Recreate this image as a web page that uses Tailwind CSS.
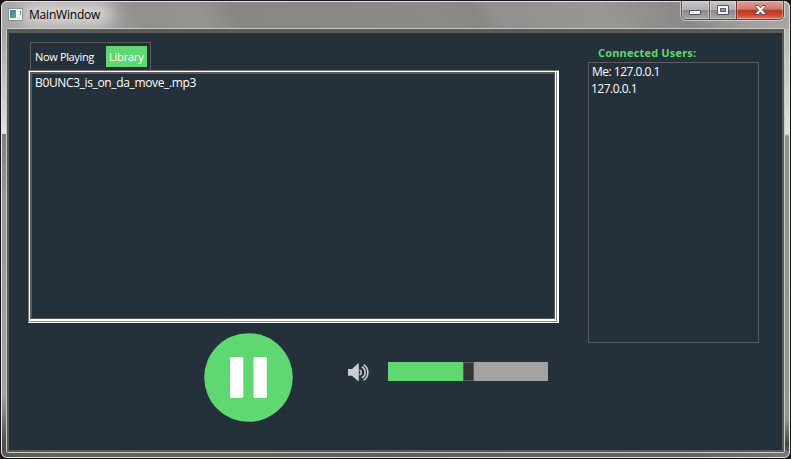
<!DOCTYPE html>
<html lang="en">
<head>
<meta charset="utf-8">
<title>MainWindow</title>
<script src="https://cdn.jsdelivr.net/npm/@tailwindcss/browser@4"></script>
</head>
<body class="bg-[#15151a] overflow-hidden font-['Open_Sans','Noto_Sans',sans-serif] text-white">
<div class="relative w-[791px] h-[459px] flex flex-col rounded-[7px] border border-[#17131a] bg-[#929292] overflow-hidden">
  <!-- window frame shading -->
  <div class="absolute inset-x-0 top-0 h-7 bg-[linear-gradient(60deg,#aaa8a6_0px,#a6a4a2_90px,#92908d_125px,#969491_180px,#878683_210px,#8b8a87_385px,#888784_418px,#92908e_435px,#999794_530px,#8b8987_600px,#a3a1a0_650px,#b5b3b2_790px)]"></div>
  <div class="absolute left-0 top-7 w-[7px] h-[106px] bg-linear-to-b from-[#a5a3a1] to-[#e6e4e3]"></div>
  <div class="absolute left-0 top-[133px] w-[7px] h-[325px] bg-[linear-gradient(#817e7b,#999592_60px,#a7a3a0_260px,#55524f_305px,#4a4846)]"></div>
  <div class="absolute right-0 top-7 w-[7px] h-[430px] bg-[linear-gradient(#b9b8b8,#cbcaca_50px,#e2e1e1_105px,#929191_107px,#969595_390px,#444_415px,#777)]"></div>
  <div class="absolute inset-x-0 bottom-0 h-[7px] bg-[linear-gradient(90deg,#555,#65645c_50px,#605f5f_50%,#656363_700px,#777)]"></div>
  <div class="absolute left-[20px] top-[3px] w-[92px] h-[20px] bg-white/60 blur-[8px] rounded-full"></div>
  <div class="absolute inset-0 border border-[#e5e1e5] rounded-[6px]"></div>

  <header class="relative h-[27px] shrink-0 flex items-start">
    <svg class="mt-[7px] ml-[7px] shrink-0" width="15" height="13" viewBox="0 0 15 13">
      <defs><linearGradient id="app" x2="1" y2="1"><stop stop-color="#4a79b4"/><stop offset="1" stop-color="#55b476"/></linearGradient></defs>
      <rect x=".5" y=".5" width="14" height="12" fill="#f4f4f4" stroke="#8b9095"/>
      <rect x="2" y="2" width="6" height="8" fill="url(#app)"/>
      <path d="M9 10.500h3" stroke="#c3c7ca"/><path d="M12.500 3v4" stroke="#4f93a0"/>
    </svg>
    <h1 class="ml-[6px] mt-[5px] text-[12px] leading-[18px] text-black tracking-[-0.2px] whitespace-nowrap">MainWindow</h1>
    <div class="ml-auto mr-[6px] w-[103px] h-[19px] flex rounded-b-[5px] border border-t-0 border-[#514b4c] shadow-[0_0_0_1px_#d0cccc] overflow-hidden">
      <div class="w-[28px] flex justify-center border-r border-[#625d5d] bg-[linear-gradient(#c7c4c4,#b1aeae_48%,#898686_50%,#a9a5a5)] shadow-[inset_0_0_0_1px_#ffffff55]">
        <svg width="13" height="18" viewBox="0 0 13 18"><rect x=".5" y="9.500" width="11" height="4" rx=".5" fill="#f5f5f5" stroke="#55526b"/></svg>
      </div>
      <div class="w-[27px] flex justify-center border-r border-[#6e3030] bg-[linear-gradient(#c7c4c4,#b1aeae_48%,#898686_50%,#a9a5a5)] shadow-[inset_0_0_0_1px_#ffffff55]">
        <svg width="13" height="18" viewBox="0 0 13 18"><path fill-rule="evenodd" d="M.5 4.500h11v9h-11zM3.500 7.500v3h5v-3z" fill="#f5f5f5" stroke="#55526b"/></svg>
      </div>
      <div class="flex-1 flex justify-center bg-[linear-gradient(#dba298,#cf796a_46%,#b83a22_50%,#c7442a_75%,#dc7861)] shadow-[inset_0_0_0_1px_#ffffff55]">
        <svg width="13" height="18" viewBox="0 0 13 18"><path d="M1.500 4.500h3l2 2.300 2-2.300h3v1.200L8.500 9l3 3.300v1.200h-3l-2-2.300-2 2.300h-3v-1.200l3-3.300-3-3.300z" fill="#f8f8f8" stroke="#55526b"/></svg>
      </div>
    </div>
  </header>

  <main class="relative mx-[5px] h-[425px] shrink-0 rounded-[2px] border border-[#c9cfc7]">
    <div class="h-full border-x-2 border-b-2 border-t-4 border-[#5b5a57] bg-[#25313a] flex items-start">
      <section class="ml-[19px] mt-[9px] w-[531px]">
        <nav class="ml-[2px] w-[121px] h-[28px] border border-b-0 border-[#5a5a5a] flex items-start text-[11px] leading-[21px] whitespace-nowrap">
          <span class="pl-[4px] pt-[3px] w-[75px] tracking-[-0.35px]">Now Playing</span>
          <span class="mt-[3px] w-[41px] h-[21px] pl-[3px] bg-[#5fd872] leading-[22px] tracking-[-0.2px]">Library</span>
        </nav>
        <div class="w-[531px] h-[253px] border border-t-[#77747a] border-l-[#77747a] border-r-white border-b-white">
          <div class="h-full border-t border-l border-r border-b border-t-white border-l-white border-r-white border-b-[#8b858b]">
            <div class="h-full border-r border-r-[#8b858b] border-b border-b-white">
              <div class="h-full border-r border-b border-white">
                <div class="h-full border-l-2 border-t-2 border-r border-b border-[#5a5a5a] pl-[3px] text-[12px] leading-[17px] tracking-[-0.36px]">B0UNC3_is_on_da_move_.mp3</div>
              </div>
            </div>
          </div>
        </div>
        <div class="flex items-start">
          <svg class="ml-[176px] mt-[10px]" width="89" height="89" viewBox="0 0 89 89"><circle cx="44.500" cy="44.500" r="44.300" fill="#5fd872"/><rect x="26" y="24" width="13.300" height="41" rx="1.500" fill="#fff"/><rect x="49.500" y="24" width="13.300" height="41" rx="1.500" fill="#fff"/></svg>
          <svg class="ml-[55px] mt-[40px]" width="22" height="19" viewBox="0 0 22 19" fill="none" stroke="#cdcdcd" stroke-width="1.600"><path d="M0 6h4L10 .5h.8v17.500H10L4 12.700H0z" fill="#cdcdcd" stroke="none"/><path d="M11.500 7a2.500 2.500 0 0 1 0 4.800M13.800 4a6 6 0 0 1 0 10.800M15.600 1.600a9.300 9.300 0 0 1 0 15.600"/></svg>
          <div class="ml-[18px] mt-[39px] w-[160px] h-[19px] flex bg-[#a2a2a2]">
            <div class="w-[75px] bg-[#5fd872]"></div>
            <div class="w-[11px] bg-[#353535] border border-[#5a5a5a]"></div>
          </div>
        </div>
      </section>
      <aside class="ml-[29px] mt-[10px] w-[171px]">
        <h2 class="pl-[10px] h-[19px] leading-[19px] text-[11px] font-bold tracking-[0.18px] text-[#5fd872] whitespace-nowrap">Connected Users:</h2>
        <ul class="h-[281px] border border-[#5a5a5a] text-[12px] leading-[17px] tracking-[-0.5px] pl-[3px]">
          <li>Me: 127.0.0.1</li>
          <li class="-ml-px">127.0.0.1</li>
        </ul>
      </aside>
    </div>
  </main>
</div>
</body>
</html>
